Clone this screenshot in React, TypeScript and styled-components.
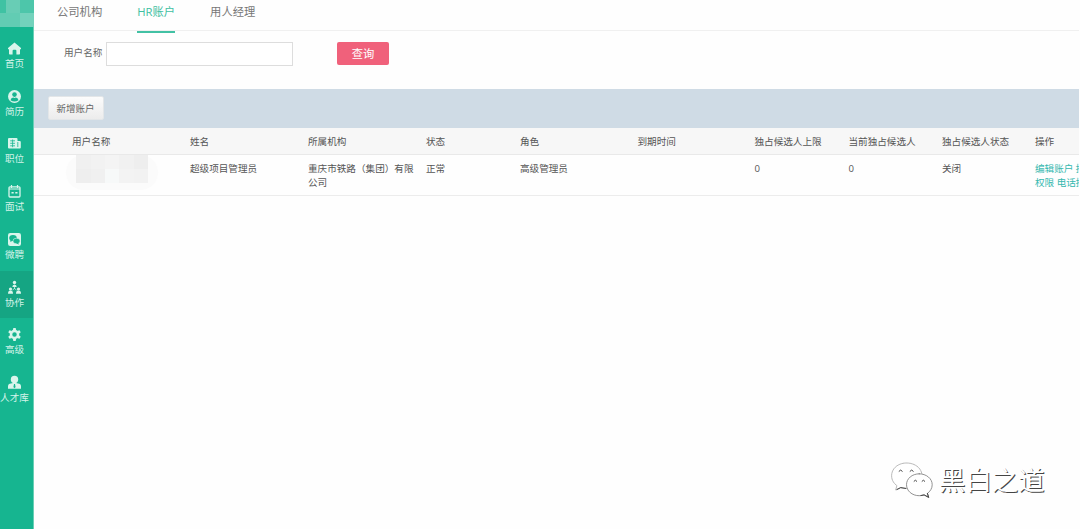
import React from "react";
import styled, { createGlobalStyle } from "styled-components";

const GlobalStyle = createGlobalStyle`
  * { box-sizing: border-box; }
  body {
    margin: 0;
    overflow: hidden;
    background: #fefefe;
    font-family: "Open Sans", "Noto Sans CJK SC", sans-serif;
    color: #666;
  }
`;

const Page = styled.div`
  position: relative;
  display: flex;
  width: 1079px;
  height: 529px;
  overflow: hidden;
`;

const Sidebar = styled.nav`
  flex: none;
  width: 34px;
  background: #16b590;
  border-right: 1px solid #6acfb6;
`;

const Avatar = styled.div`
  display: grid;
  grid-template-columns: 6px 14px 14px;
  grid-template-rows: 13px 14px;
  height: 27px;
  width: 34px;
  margin-bottom: 4.8px;
`;

const Tile = styled.i<{ $c: string }>`
  background: ${(p) => p.$c};
`;

const NavItem = styled.a<{ $active?: boolean }>`
  display: flex;
  flex-direction: column;
  align-items: center;
  height: 47.75px;
  padding-top: 9px;
  width: 33px;
  padding-right: 4px;
  background: ${(p) => (p.$active ? "#15a583" : "transparent")};
  color: #d3f3e9;
  font-size: 9.6px;
  line-height: 14px;
  white-space: nowrap;
  svg { flex: none; display: block; margin-bottom: 1px; }
`;

const Main = styled.main`
  flex: 1;
  min-width: 0;
`;

const Tabs = styled.div`
  display: flex;
  gap: 35px;
  height: 31px;
  padding-left: 23px;
  border-bottom: 1px solid #f0f0f0;
`;

const Tab = styled.a<{ $active?: boolean }>`
  height: 33px;
  font-size: 11.3px;
  line-height: 23px;
  color: ${(p) => (p.$active ? "#3fc0a2" : "#777")};
  border-bottom: 2px solid ${(p) => (p.$active ? "#42c1a4" : "transparent")};
`;

const Search = styled.div`
  display: flex;
  height: 58px;
  padding: 11px 0 0 30px;
  font-size: 9.6px;
`;

const FieldLabel = styled.label`
  width: 42px;
  line-height: 21px;
`;

const Input = styled.input`
  width: 187px;
  height: 24px;
  border: 1px solid #ddd;
  background: #fff;
  outline: none;
`;

const QueryButton = styled.button`
  width: 52px;
  height: 23px;
  margin-left: 44px;
  padding: 0 0 2px;
  border: 0;
  border-radius: 2px;
  background: #f0617b;
  color: #fff;
  font: 11.3px "Open Sans", "Noto Sans CJK SC", sans-serif;
`;

const Toolbar = styled.div`
  display: flex;
  align-items: flex-start;
  height: 39px;
  padding: 7px 0 0 14px;
  background: #cfdbe5;
`;

const AddButton = styled.button`
  width: 56px;
  height: 24px;
  padding: 0 1px 0 0;
  border: 1px solid #e3e6e8;
  border-radius: 2px;
  background: linear-gradient(#fcfcfc, #ececec);
  color: #666;
  font: 9.5px "Open Sans", "Noto Sans CJK SC", sans-serif;
`;

const Row = styled.div<{ $head?: boolean }>`
  display: grid;
  grid-template-columns: 118px 118px 118px 94px 117.5px 117px 94px 93.5px 93px 80px;
  width: 1045px;
  height: ${(p) => (p.$head ? 27 : 40.5)}px;
  padding: 7px 0 0 38px;
  overflow: hidden;
  background: ${(p) => (p.$head ? "#f7f7f7" : "transparent")};
  border-bottom: 1px solid ${(p) => (p.$head ? "#e9e9e9" : "#ececec")};
  font-size: 9.6px;
  line-height: 13.5px;
  color: #555;
`;

const Cell = styled.div`
  padding-right: 11px;
  white-space: pre-line;
`;

const Links = styled.div`
  color: #35b8af;
  white-space: pre;
`;

const Redacted = styled.div`
  display: grid;
  grid-template-columns: 15px 14px 14px 15px 14px;
  grid-template-rows: 14px 14px;
  width: 92px;
  height: 35px;
  margin: -7px 0 0 -6px;
  padding: 0 0 0 10px;
  border-radius: 18px;
  background: #fbfbfb;
`;

const Brand = styled.div`
  position: absolute;
  left: 890px;
  top: 460px;
  display: flex;
  gap: 5px;
  height: 42px;
  color: #fff;
  font: 26.4px/42px "Noto Sans CJK SC", sans-serif;
  white-space: nowrap;
  text-shadow: 1px 1px 0.6px #444;
`;

const BrandName = styled.span`
  height: 42px;
  line-height: 37px;
`;

const Trace = styled.span<{ $x: number; $y: number }>`
  position: absolute;
  left: ${(p) => p.$x}px;
  top: ${(p) => p.$y}px;
  transform: rotate(-10deg);
  font: 14.5px "Open Sans", sans-serif;
  color: rgba(0, 0, 0, 0.018);
  pointer-events: none;
`;

const traces = [
  [111, 38], [235, 42], [433, 91], [525, 130], [405, 176], [550, 176],
  [858, 176], [120, 132], [205, 136], [690, 132], [60, 235], [300, 250],
  [560, 245], [830, 250], [150, 320], [420, 330], [690, 325], [930, 330],
  [70, 400], [320, 410], [580, 405], [840, 410], [170, 478], [450, 485],
];

type Glyph = "home" | "user" | "job" | "calendar" | "chat" | "team" | "gear" | "talent";

const Icon = ({ name }: { name: Glyph }) => (
  <svg width="15" height="15" viewBox="0 0 15 15" fill="#d9f5ec">
    {name === "home" && (
      <path d="M7.5 1.4 1 6.900v1.300h1v4.500q0 .8.8.8h2.800V9.800q0-1 1-1h1.800q1 0 1 1v3.700h2.800q.8 0 .8-.8V8.200h1V6.900z" />
    )}
    {name === "user" && (
      <>
        <circle cx="7.5" cy="7.5" r="6.5" />
        <circle cx="7.5" cy="5.6" r="2.3" fill="#16b590" />
        <path d="M3.5 11.200q.5-2.500 2.700-2.700 1.300.8 2.600 0 2.200.2 2.700 2.700-4 2.500-8 0z" fill="#16b590" />
      </>
    )}
    {name === "job" && (
      <>
        <path d="M2 2h7.500q1 0 1 1v2h2.300q1 0 1 1v5.500q0 1-1 1H2q-1 0-1-1V3q0-1 1-1z" />
        <path d="M3.200 4.800H8M3.200 7.300H8M3.200 9.800H8M5.600 3.500v7.700M10.800 6v5" stroke="#16b590" strokeWidth=".8" />
      </>
    )}
    {name === "calendar" && (
      <>
        <rect x="2" y="2.800" width="11" height="10.200" rx="1" fill="none" stroke="#d9f5ec" strokeWidth="1.300" />
        <path d="M2 5h11M4.500 1v3M10.500 1v3" stroke="#d9f5ec" strokeWidth="1.200" />
        <path d="M4.500 8.800h2.200M8.300 8.800h2.200" stroke="#d9f5ec" strokeWidth="1.400" />
      </>
    )}
    {name === "chat" && (
      <>
        <rect x="1" y="1" width="13" height="13" rx="2.200" />
        <ellipse cx="6" cy="6" rx="3.800" ry="3.100" fill="#16b590" />
        <ellipse cx="9.500" cy="9" rx="3.600" ry="2.800" fill="#16b590" stroke="#d9f5ec" strokeWidth=".6" />
        <path d="m3.500 8-.2 2L6 8.500m5 2.300 1 1.600-2.700-.8" fill="#16b590" />
      </>
    )}
    {name === "team" && (
      <>
        <circle cx="7.500" cy="2.500" r="1.700" />
        <path d="M5.300 7q.1-2.500 2.200-2.500T9.700 7zM1 13.700q0-3.300 2.500-3.300T6 13.700zM9 13.700q0-3.300 2.500-3.300t2.500 3.300z" />
        <circle cx="3.500" cy="9" r="1.600" />
        <circle cx="11.500" cy="9" r="1.600" />
        <path d="M7.500 6v3M7.500 8.500l-2 1.500M7.500 8.500l2 1.500" stroke="#d9f5ec" strokeWidth=".7" />
      </>
    )}
    {name === "gear" && (
      <>
        <circle cx="7.500" cy="7.500" r="3.500" fill="none" stroke="#d9f5ec" strokeWidth="2.500" />
        {[0, 60, 120, 180, 240, 300].map((a) => (
          <path key={a} d="M5.800 3.600 6.300 1h2.400l.5 2.600z" transform={`rotate(${a} 7.500 7.500)`} />
        ))}
      </>
    )}
    {name === "talent" && (
      <>
        <circle cx="7.500" cy="4.400" r="3.700" />
        <path d="M1 13.700v-2.500q0-2.400 3-2.700l2-.6h3l2 .6q3 .3 3 2.700v2.500z" />
        <path d="m7 9-.6 3 1.100 1.300L8.600 12 8 9z" fill="#16b590" />
      </>
    )}
  </svg>
);

const BrandMark = () => (
  <svg width="44" height="42" viewBox="0 0 44 42" fill="#fff" stroke="#777" strokeWidth=".8" strokeLinecap="round">
    <path stroke="#aaa" strokeDasharray="3 .6" d="M16.500 3C8 3 1.600 8.600 1.600 15.700c0 4.200 2 7.600 5.300 9.900L5.700 30l5-2.400c2 .6 4 .9 6.300.8C26 28.400 32 23 32 15.700 32 8.600 25.400 3 16.500 3z" />
    <path d="M29.200 13.800c-7.200 0-12.700 4.800-12.700 10.900S22 35.700 29.200 35.700c1.800 0 3.400-.3 4.900-.8l4.600 2.500-1.300-4c2.800-2 4.800-5 4.800-8.700 0-6.100-5.800-10.900-13-10.900z" />
    <path stroke="#444" strokeWidth="1" fill="none" d="M9 11.200q1.700-2.600 3.300 0M20 11.200q1.700-2.600 3.300 0M24 21.200q1.400-2.300 2.800 0M32 21.200q1.400-2.300 2.800 0M7 29.500l3.700-1.900 5 .8M31 35.500l3.100-.6 4.600 2.500-1.300-4" />
  </svg>
);

const nav: [Glyph, string][] = [
  ["home", "首页"], ["user", "简历"], ["job", "职位"], ["calendar", "面试"],
  ["chat", "微聘"], ["team", "协作"], ["gear", "高级"], ["talent", "人才库"],
];

const columns = ["用户名称", "姓名", "所属机构", "状态", "角色", "到期时间", "独占候选人上限", "当前独占候选人", "独占候选人状态", "操作"];
const account = ["超级项目管理员", "重庆市铁路（集团）有限公司", "正常", "高级管理员", "", "0", "0", "关闭"];
const avatarTiles = ["#3fc2a3", "#68cdb5", "#4dc6aa", "#62ccb3", "#62ccb3", "#73d2bc"];
const redactedTiles = ["#f0f0f0", "#f2f2f2", "#f4f4f4", "#f1f1f1", "#eeeeee", "#eeeeee", "#f0f0f0", "#f7f9f9", "#f3f3f3", "#f2f2f2"];

export default function App() {
  return (
    <>
      <GlobalStyle />
      <Page>
        <Sidebar>
          <Avatar>{avatarTiles.map((c, i) => <Tile key={i} $c={c} />)}</Avatar>
          {nav.map(([icon, label]) => (
            <NavItem key={label} $active={icon === "team"}>
              <Icon name={icon} />
              {label}
            </NavItem>
          ))}
        </Sidebar>
        <Main>
          <Tabs>
            <Tab>公司机构</Tab>
            <Tab $active>HR账户</Tab>
            <Tab>用人经理</Tab>
          </Tabs>
          <Search>
            <FieldLabel htmlFor="username">用户名称</FieldLabel>
            <Input id="username" />
            <QueryButton>查询</QueryButton>
          </Search>
          <Toolbar>
            <AddButton>新增账户</AddButton>
          </Toolbar>
          <Row $head>
            {columns.map((c) => <Cell key={c}>{c}</Cell>)}
          </Row>
          <Row>
            <Redacted>{redactedTiles.map((c, i) => <Tile key={i} $c={c} />)}</Redacted>
            {account.map((c, i) => <Cell key={i}>{c}</Cell>)}
            <Links>{"编辑账户 接\n权限 电话接"}</Links>
          </Row>
        </Main>
        {traces.map(([x, y], i) => <Trace key={i} $x={x} $y={y}>57033813206293</Trace>)}
        <Brand>
          <BrandMark />
          <BrandName>黑白之道</BrandName>
        </Brand>
      </Page>
    </>
  );
}
